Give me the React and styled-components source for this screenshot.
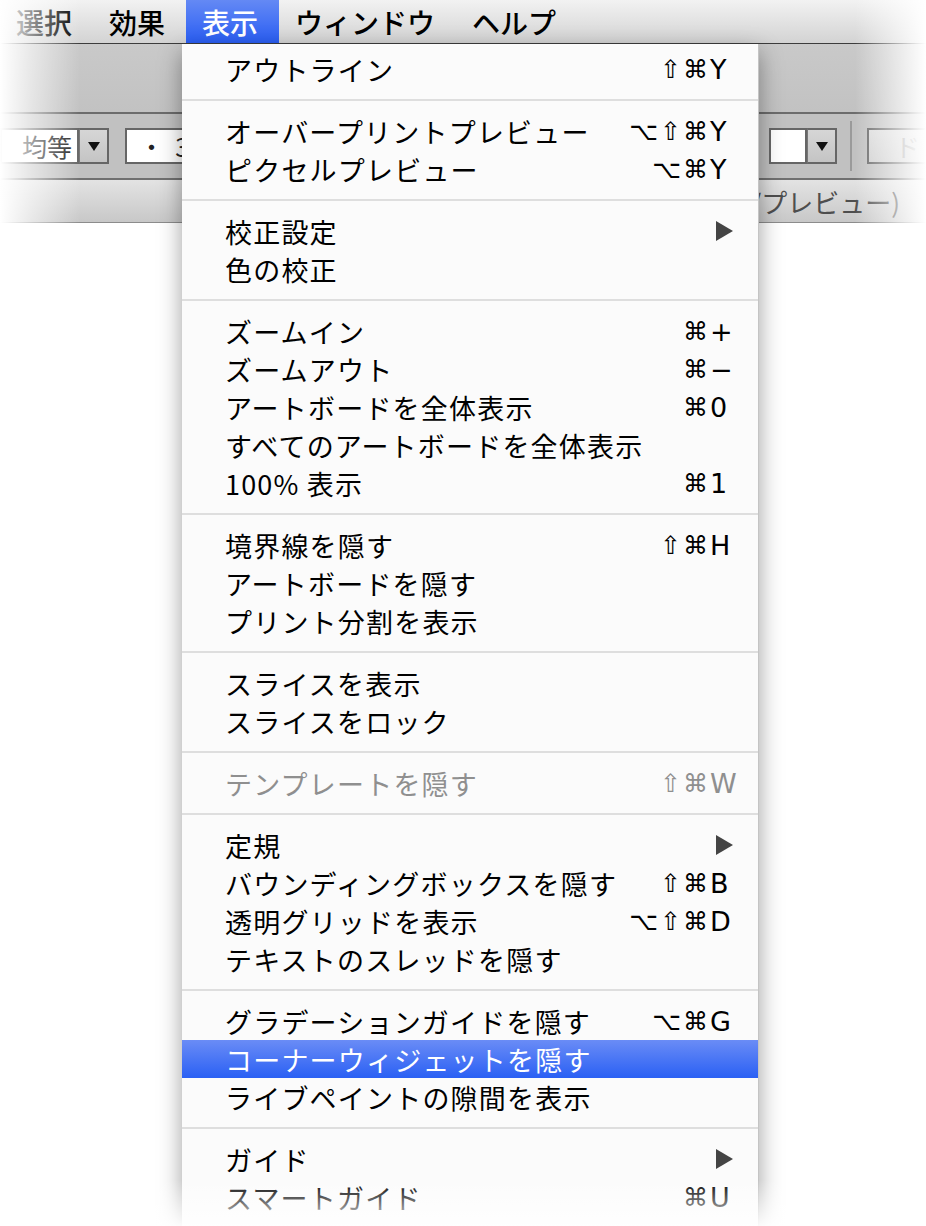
import React from "react";
import styled, { createGlobalStyle } from "styled-components";

const GlobalStyle = createGlobalStyle`
  html, body {
    margin: 0;
    padding: 0;
    background: #fff;
    overflow: hidden;
  }
  body {
    font-family: "Noto Sans CJK JP", "Noto Sans", sans-serif;
  }
`;

const menuBarItems = ["選択", "効果", "表示", "ウィンドウ", "ヘルプ"];

const menuItems = [
  { label: "アウトライン", mods: "⇧⌘", k: "Y" },
  "sep",
  { label: "オーバープリントプレビュー", mods: "⌥⇧⌘", k: "Y" },
  { label: "ピクセルプレビュー", mods: "⌥⌘", k: "Y" },
  "sep",
  { label: "校正設定", arrow: true },
  { label: "色の校正" },
  "sep",
  { label: "ズームイン", mods: "⌘", k: "+" },
  { label: "ズームアウト", mods: "⌘", k: "−" },
  { label: "アートボードを全体表示", mods: "⌘", k: "0" },
  { label: "すべてのアートボードを全体表示" },
  { label: "100% 表示", mods: "⌘", k: "1" },
  "sep",
  { label: "境界線を隠す", mods: "⇧⌘", k: "H" },
  { label: "アートボードを隠す" },
  { label: "プリント分割を表示" },
  "sep",
  { label: "スライスを表示" },
  { label: "スライスをロック" },
  "sep",
  { label: "テンプレートを隠す", mods: "⇧⌘", k: "W", disabled: true },
  "sep",
  { label: "定規", arrow: true },
  { label: "バウンディングボックスを隠す", mods: "⇧⌘", k: "B" },
  { label: "透明グリッドを表示", mods: "⌥⇧⌘", k: "D" },
  { label: "テキストのスレッドを隠す" },
  "sep",
  { label: "グラデーションガイドを隠す", mods: "⌥⌘", k: "G" },
  { label: "コーナーウィジェットを隠す", active: true },
  { label: "ライブペイントの隙間を表示" },
  "sep",
  { label: "ガイド", arrow: true },
  { label: "スマートガイド", mods: "⌘", k: "U" },
];

const Page = styled.div`
  position: relative;
  width: 926px;
  height: 1226px;
  overflow: hidden;
  background: #fff;
`;

const Header = styled.header`
  position: relative;
  &::after {
    content: "";
    position: absolute;
    inset: 0;
    pointer-events: none;
    background: linear-gradient(
      90deg,
      #fff 0px,
      rgba(255, 255, 255, 0.6) 30px,
      rgba(255, 255, 255, 0) 80px,
      rgba(255, 255, 255, 0) 855px,
      rgba(255, 255, 255, 0.7) 905px,
      #fff 926px
    );
  }
`;

const MenuBar = styled.nav`
  display: flex;
  height: 43px;
  background: linear-gradient(#f2f2f2, #d3d3d3);
  border-bottom: 1px solid #3c3c3c;
`;

const BarItem = styled.div`
  display: flex;
  align-items: center;
  height: 43px;
  padding: 0 21px 0 16px;
  font-size: 28px;
  font-weight: 500;
  color: ${({ $active }) => ($active ? "#fff" : "#000")};
  background: ${({ $active }) =>
    $active ? "linear-gradient(#6489f4, #2a5ef4)" : "transparent"};
`;

const UpperStrip = styled.div`
  height: 68px;
  background: linear-gradient(#c9c9c9, #c2c2c2);
  border-bottom: 2px solid #6c6c6c;
`;

const ControlBar = styled.div`
  display: flex;
  align-items: center;
  height: 64px;
  background: #c1c1c1;
  border-bottom: 2px solid #707070;
`;

const Field = styled.div`
  flex-shrink: 0;
  display: flex;
  align-items: center;
  box-sizing: border-box;
  width: ${({ $w }) => $w}px;
  height: 36px;
  margin-left: ${({ $ml }) => $ml || 0}px;
  padding-left: ${({ $pl }) => $pl || 0}px;
  border: 2px solid #666;
  background: ${({ $dim }) => ($dim ? "linear-gradient(#dcdcdc, #cfcfcf)" : "#fff")};
  font-size: 25px;
  color: ${({ $dim }) => ($dim ? "#999" : "#222")};
  white-space: nowrap;
  overflow: hidden;
`;

const DropButton = styled.div`
  flex-shrink: 0;
  display: flex;
  align-items: center;
  justify-content: center;
  box-sizing: border-box;
  width: 30px;
  height: 36px;
  border: 2px solid #666;
  border-left: 1px solid #777;
  background: linear-gradient(#d6d6d6, #c4c4c4);
`;

const VSep = styled.div`
  flex-shrink: 0;
  width: 2px;
  height: 50px;
  margin-left: 13px;
  background: #9a9a9a;
`;

const TabBar = styled.div`
  display: flex;
  justify-content: flex-end;
  align-items: center;
  height: 42px;
  padding-right: 26px;
  background: linear-gradient(#e3e3e3, #c8c8c8);
  border-bottom: 1px solid #8c8c8c;
  font-size: 26px;
  color: #4e4e4e;
  white-space: nowrap;
  overflow: hidden;
`;

const Menu = styled.div`
  position: absolute;
  z-index: 5;
  left: 182px;
  top: 44px;
  width: 576px;
  padding-top: 6px;
  padding-bottom: 20px;
  background: #fbfbfb;
  border-right: 1px solid #c4c4c4;
  box-shadow: 0 8px 22px rgba(0, 0, 0, 0.38);
`;

const Row = styled.div`
  display: flex;
  align-items: center;
  height: 38px;
  padding: 0 22px 0 43px;
  font-size: 27px;
  letter-spacing: 1.2px;
  color: ${({ $disabled, $active }) =>
    $active ? "#fff" : $disabled ? "#8f8f8f" : "#000"};
  background: ${({ $active }) =>
    $active ? "linear-gradient(#6a8cf6, #2a60f4)" : "transparent"};
`;

const Label = styled.span`
  flex: 1;
  white-space: nowrap;
`;

const Mods = styled.span`
  font-family: "DejaVu Sans", sans-serif;
  font-size: 25px;
  letter-spacing: 2px;
`;

const Key = styled.span`
  width: 26px;
  font-family: "DejaVu Sans", sans-serif;
  font-size: 27px;
  display: flex;
  justify-content: ${({ $end }) => ($end ? "flex-end" : "flex-start")};
  padding-right: ${({ $end }) => ($end ? 3 : 0)}px;
  box-sizing: border-box;
  letter-spacing: 0;
`;

const Separator = styled.div`
  height: 2px;
  margin: 11px 0;
  background: #dedede;
`;

const BottomFade = styled.div`
  position: absolute;
  z-index: 10;
  left: 0;
  right: 0;
  bottom: 0;
  height: 46px;
  pointer-events: none;
  background: linear-gradient(rgba(255, 255, 255, 0), rgba(255, 255, 255, 0.92));
`;

const Caret = () => (
  <svg width="12" height="9" viewBox="0 0 12 9">
    <path d="M0 0 H12 L6 9 Z" fill="#111" />
  </svg>
);

const SubArrow = () => (
  <svg width="17" height="20" viewBox="0 0 17 20">
    <path d="M0 0 L17 10 L0 20 Z" fill="#444" />
  </svg>
);

const MenuRow = ({ item }) => (
  <Row $disabled={item.disabled} $active={item.active}>
    <Label>{item.label}</Label>
    {item.mods && <Mods>{item.mods}</Mods>}
    {(item.k || item.arrow) && (
      <Key $end={item.arrow}>{item.arrow ? <SubArrow /> : item.k}</Key>
    )}
  </Row>
);

export default function App() {
  return (
    <>
      <GlobalStyle />
      <Page>
        <Header>
          <MenuBar>
            {menuBarItems.map((t) => (
              <BarItem key={t} $active={t === "表示"}>
                {t}
              </BarItem>
            ))}
          </MenuBar>
          <UpperStrip />
          <ControlBar>
            <Field $w={79} $pl={20}>均等</Field>
            <DropButton>
              <Caret />
            </DropButton>
            <Field $w={634} $ml={16} $pl={12}>
              ・&nbsp;&nbsp;3
            </Field>
            <Field $w={38} $ml={10} />
            <DropButton>
              <Caret />
            </DropButton>
            <VSep />
            <Field $w={90} $ml={15} $pl={26} $dim>
              ド
            </Field>
          </ControlBar>
          <TabBar>名称未設定-1 @ 100% (CMYK/プレビュー)</TabBar>
        </Header>
        <Menu>
          {menuItems.map((item, i) =>
            item === "sep" ? <Separator key={i} /> : <MenuRow key={i} item={item} />
          )}
        </Menu>
        <BottomFade />
      </Page>
    </>
  );
}
